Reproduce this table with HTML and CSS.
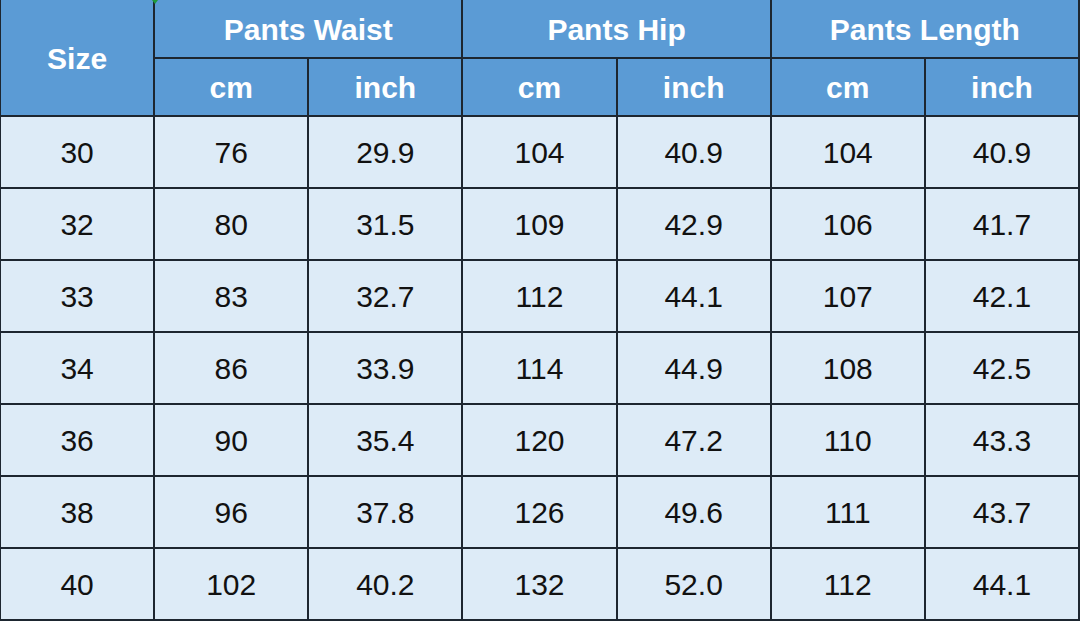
FILE: index.html
```html
<!DOCTYPE html>
<html lang="en">
<head>
<meta charset="utf-8">
<title>Pants Size Chart</title>
<link rel="stylesheet" href="styles.css">
</head>
<body>
<div class="chart">
  <span class="marker"></span>
  <div class="cell head size">Size</div>
  <div class="cell head group">Pants Waist</div>
  <div class="cell head group">Pants Hip</div>
  <div class="cell head group">Pants Length</div>
  <div class="cell head">cm</div>
  <div class="cell head">inch</div>
  <div class="cell head">cm</div>
  <div class="cell head">inch</div>
  <div class="cell head">cm</div>
  <div class="cell head">inch</div>

  <div class="cell">30</div><div class="cell">76</div><div class="cell">29.9</div><div class="cell">104</div><div class="cell">40.9</div><div class="cell">104</div><div class="cell">40.9</div>
  <div class="cell">32</div><div class="cell">80</div><div class="cell">31.5</div><div class="cell">109</div><div class="cell">42.9</div><div class="cell">106</div><div class="cell">41.7</div>
  <div class="cell">33</div><div class="cell">83</div><div class="cell">32.7</div><div class="cell">112</div><div class="cell">44.1</div><div class="cell">107</div><div class="cell">42.1</div>
  <div class="cell">34</div><div class="cell">86</div><div class="cell">33.9</div><div class="cell">114</div><div class="cell">44.9</div><div class="cell">108</div><div class="cell">42.5</div>
  <div class="cell">36</div><div class="cell">90</div><div class="cell">35.4</div><div class="cell">120</div><div class="cell">47.2</div><div class="cell">110</div><div class="cell">43.3</div>
  <div class="cell">38</div><div class="cell">96</div><div class="cell">37.8</div><div class="cell">126</div><div class="cell">49.6</div><div class="cell">111</div><div class="cell">43.7</div>
  <div class="cell">40</div><div class="cell">102</div><div class="cell">40.2</div><div class="cell">132</div><div class="cell">52.0</div><div class="cell">112</div><div class="cell">44.1</div>
</div>
</body>
</html>
```

FILE: styles.css
```css
html, body {
  margin: 0;
  padding: 0;
  background: #ffffff;
}

body {
  width: 1080px;
  height: 622px;
  overflow: hidden;
}

.chart {
  position: relative;
  display: grid;
  grid-template-columns: repeat(7, 1fr);
  grid-template-rows: 57px 56px repeat(7, 70px);
  gap: 2px;
  padding: 0 2px 2px 1px;
  background: #1d2630;
  width: 1080px;
  box-sizing: border-box;
  font-family: "Liberation Sans", Arial, sans-serif;
}

.cell {
  display: flex;
  align-items: center;
  justify-content: center;
  padding-top: 2px;
  background: #ddebf7;
  color: #111111;
  font-size: 30px;
}

.head {
  background: #5b9bd5;
  color: #ffffff;
  font-weight: bold;
}

.size {
  grid-row: span 2;
}

.group {
  grid-column: span 2;
}

.marker {
  position: absolute;
  left: 152px;
  top: 0;
  width: 0;
  height: 0;
  border-left: 3px solid transparent;
  border-right: 3px solid transparent;
  border-top: 4px solid #1f9a3c;
  z-index: 1;
}
```
